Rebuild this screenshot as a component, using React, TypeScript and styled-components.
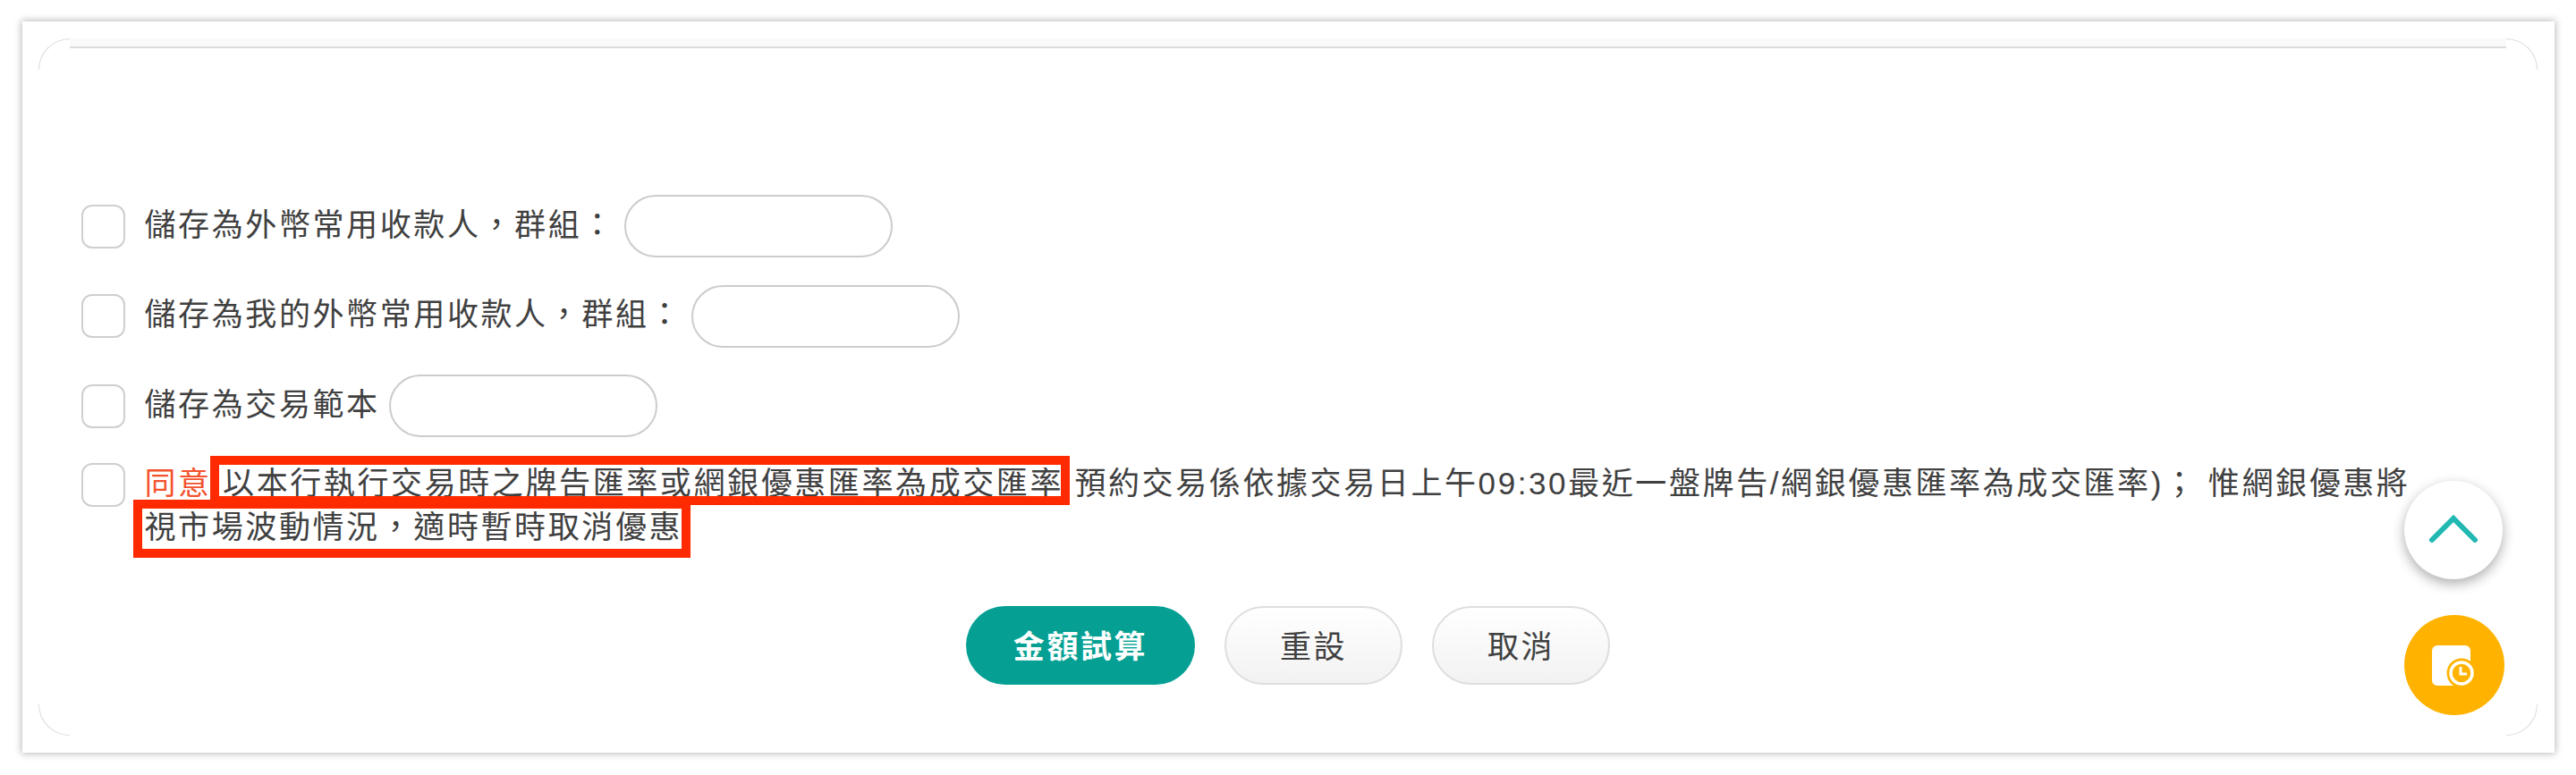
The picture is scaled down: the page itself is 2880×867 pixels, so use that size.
import React from "react";
import styled, { createGlobalStyle } from "styled-components";

const Global = createGlobalStyle`
  html, body { margin: 0; padding: 0; background: #fff; }
  body { font-family: "Liberation Sans", "Noto Sans CJK TC", sans-serif; color: #404040; }
`;

const Page = styled.div`
  position: relative;
  height: 867px;
  box-sizing: border-box;
  padding: 24px 24px 25px 25px;
  overflow: hidden;
`;

const Card = styled.div`
  height: 100%;
  box-sizing: border-box;
  padding: 19px 19px 19px 18px;
  background: #fff;
  box-shadow: 0 0 8px 1px rgba(0, 0, 0, 0.28);
`;

const Frame = styled.div`
  position: relative;
  height: 100%;
  box-sizing: border-box;
  padding: 0 47.5px;
  display: flex;
  flex-direction: column;
`;

const Corner = styled.span<{ $v: "top" | "bottom"; $h: "left" | "right" }>`
  position: absolute;
  ${(p) => p.$v}: 0;
  ${(p) => p.$h}: 0;
  width: 35px;
  height: 35px;
  box-sizing: border-box;
  border-${(p) => p.$v}: 1px solid #dcdcdc;
  border-${(p) => p.$h}: 1px solid #dcdcdc;
  border-${(p) => p.$v}-${(p) => p.$h}-radius: 35px;
`;

const TopLine = styled.div`
  flex: none;
  height: 11px;
  box-sizing: border-box;
  margin: 0 -12.5px;
  background: #fafafa;
  border-bottom: 2px solid #dcdcdc;
`;

const Options = styled.div`
  margin-top: 164px;
  display: flex;
  flex-direction: column;
  gap: 30.5px;
`;

const Row = styled.label`
  display: flex;
  align-items: center;
  height: 70px;
`;

const Check = styled.span`
  flex: none;
  width: 49px;
  height: 49px;
  box-sizing: border-box;
  border: 2px solid #cfcfcf;
  border-radius: 12px;
  background: #fff;
  margin-right: 22px;
`;

const Label = styled.span`
  font-size: 35px;
  letter-spacing: 2.6px;
  white-space: nowrap;
  line-height: 48px;
  padding-bottom: 3px;
`;

const TextInput = styled.input`
  width: 300px;
  height: 70px;
  box-sizing: border-box;
  margin-left: 10px;
  border: 2px solid #cccccc;
  border-radius: 35px;
  background: #fff;
  outline: none;
`;

const AgreeRow = styled.div`
  display: flex;
  align-items: flex-start;
  margin-top: 29px;
`;

const AgreeText = styled.p`
  margin: -2.5px 0 0;
  font-size: 35px;
  letter-spacing: 2.6px;
  line-height: 49px;
  white-space: nowrap;
`;

const Agree = styled.span`
  color: #f4522d;
`;

const Marked = styled.span<{ $inset: string }>`
  position: relative;
  &::after {
    content: "";
    position: absolute;
    inset: ${(p) => p.$inset};
    border: 10px solid #ff2a00;
    pointer-events: none;
  }
`;

const Actions = styled.div`
  display: flex;
  justify-content: center;
  gap: 33px;
  margin-top: 64.5px;
`;

const Button = styled.button<{ $primary?: boolean }>`
  height: 88px;
  width: ${(p) => (p.$primary ? "256px" : "199px")};
  border-radius: 44px;
  box-sizing: border-box;
  padding: 0 0 3px;
  font-family: inherit;
  font-size: 35px;
  letter-spacing: 2.6px;
  font-weight: ${(p) => (p.$primary ? 700 : 400)};
  color: ${(p) => (p.$primary ? "#fff" : "#404040")};
  border: ${(p) => (p.$primary ? "none" : "2px solid #dedede")};
  background: ${(p) => (p.$primary ? "#05a093" : "linear-gradient(#ffffff, #f2f2f2)")};
`;

const Fab = styled.div<{ $top: number; $size: number; $bg: string; $shadow?: boolean }>`
  position: absolute;
  left: 2688px;
  top: ${(p) => p.$top}px;
  width: ${(p) => p.$size}px;
  height: ${(p) => p.$size}px;
  border-radius: 50%;
  background: ${(p) => p.$bg};
  display: flex;
  align-items: center;
  justify-content: center;
  box-shadow: ${(p) => (p.$shadow ? "0 5px 14px rgba(0, 0, 0, 0.32)" : "none")};
`;

export default function App() {
  return (
    <Page>
      <Global />
      <Card>
        <Frame>
          <Corner $v="top" $h="left" />
          <Corner $v="top" $h="right" />
          <Corner $v="bottom" $h="left" />
          <Corner $v="bottom" $h="right" />
          <TopLine />
          <Options>
            <Row>
              <Check />
              <Label>儲存為外幣常用收款人，群組：</Label>
              <TextInput />
            </Row>
            <Row>
              <Check />
              <Label>儲存為我的外幣常用收款人，群組：</Label>
              <TextInput />
            </Row>
            <Row>
              <Check />
              <Label>儲存為交易範本</Label>
              <TextInput />
            </Row>
          </Options>
          <AgreeRow>
            <Check />
            <AgreeText>
              <Agree>同意</Agree>{" "}
              <Marked $inset="-11px -7px -5px -14px">以本行執行交易時之牌告匯率或網銀優惠匯率為成交匯率</Marked>{" "}
              預約交易係依據交易日上午09:30最近一盤牌告/網銀優惠匯率為成交匯率)； 惟網銀優惠將
              <br />
              <Marked $inset="-11px -9px -15px -13px">視市場波動情況，適時暫時取消優惠</Marked>
            </AgreeText>
          </AgreeRow>
          <Actions>
            <Button $primary>金額試算</Button>
            <Button>重設</Button>
            <Button>取消</Button>
          </Actions>
        </Frame>
      </Card>
      <Fab $top={538} $size={110} $bg="#fff" $shadow>
        <svg width="110" height="110" viewBox="0 0 110 110">
          <path d="M31 66 L55 42 L79 66" fill="none" stroke="#20b8b0" strokeWidth="6" strokeLinecap="round" strokeLinejoin="miter" />
        </svg>
      </Fab>
      <Fab $top={688} $size={112} $bg="#ffb300">
        <svg width="112" height="112" viewBox="0 0 112 112">
          <rect x="31" y="34" width="43" height="45" rx="6" fill="#fff" />
          <circle cx="64" cy="65" r="16.5" fill="#ffb300" />
          <circle cx="64" cy="65" r="12" fill="none" stroke="#fff" strokeWidth="3.5" />
          <path d="M63 58 V66 H70" fill="none" stroke="#fff" strokeWidth="3" />
        </svg>
      </Fab>
    </Page>
  );
}
